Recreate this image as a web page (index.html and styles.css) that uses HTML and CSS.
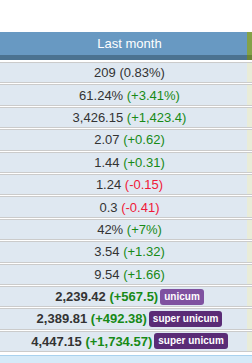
FILE: index.html
```html
<!DOCTYPE html>
<html>
<head>
<meta charset="utf-8">
<link rel="stylesheet" href="styles.css">
</head>
<body>
<div class="page">
  <div class="head">
    <div class="hmain">Last month</div>
    <div class="hside"></div>
  </div>
  <div class="row"><div class="cell">209 <span class="neutral">(0.83%)</span></div><div class="side"></div></div>
  <div class="row"><div class="cell">61.24% <span class="up">(+3.41%)</span></div><div class="side"></div></div>
  <div class="row"><div class="cell">3,426.15 <span class="up">(+1,423.4)</span></div><div class="side"></div></div>
  <div class="row"><div class="cell">2.07 <span class="up">(+0.62)</span></div><div class="side"></div></div>
  <div class="row"><div class="cell">1.44 <span class="up">(+0.31)</span></div><div class="side"></div></div>
  <div class="row"><div class="cell">1.24 <span class="down">(-0.15)</span></div><div class="side"></div></div>
  <div class="row"><div class="cell">0.3 <span class="down">(-0.41)</span></div><div class="side"></div></div>
  <div class="row"><div class="cell">42% <span class="up">(+7%)</span></div><div class="side"></div></div>
  <div class="row"><div class="cell">3.54 <span class="up">(+1.32)</span></div><div class="side"></div></div>
  <div class="row"><div class="cell">9.54 <span class="up">(+1.66)</span></div><div class="side"></div></div>
  <div class="row"><div class="cell bold">2,239.42 <span class="up">(+567.5)</span> <span class="badge unicum">unicum</span></div><div class="side"></div></div>
  <div class="row"><div class="cell bold">2,389.81 <span class="up">(+492.38)</span> <span class="badge super">super unicum</span></div><div class="side"></div></div>
  <div class="row"><div class="cell bold">4,447.15 <span class="up">(+1,734.57)</span> <span class="badge super">super unicum</span></div><div class="side"></div></div>
  <div class="foot"></div>
</div>
</body>
</html>
```
FILE: styles.css
```css
html, body {
  margin: 0;
  padding: 0;
  background: #ffffff;
}
body {
  font-family: "Liberation Sans", Arial, sans-serif;
  font-size: 13px;
  color: #333333;
}
.page {
  padding-top: 32px;
  display: flex;
  flex-direction: column;
}
.head {
  display: flex;
  height: 28px;
}
.hmain {
  flex: 1;
  background: #6899c2;
  border-bottom: 5px solid #4b7290;
  color: #ffffff;
  text-align: center;
  padding-left: 12px;
  line-height: 23px;
  font-size: 13px;
}
.hside {
  width: 5px;
  background: #84a248;
  border-bottom: 5px solid #6a8437;
}
.row {
  display: flex;
  height: 21.4px;
  box-sizing: border-box;
  margin-top: 1px;
  border-top: 1px solid #cbcbcb;
  border-bottom: 1px solid #cbcbcb;
}
.head + .row {
  margin-top: 2px;
}
.cell {
  flex: 1;
  background: #dfe8f1;
  text-align: center;
  padding-left: 12px;
  display: flex;
  align-items: center;
  justify-content: center;
  white-space: pre;
}
.side {
  width: 5px;
  background: #e9ecd8;
}
.neutral {
  color: #333333;
}
.up {
  color: #178a17;
}
.down {
  color: #f01838;
}
.bold {
  font-weight: bold;
}
.badge {
  display: inline-block;
  font-size: 10px;
  font-weight: bold;
  color: #ffffff;
  line-height: 16px;
  padding: 0 4px;
  border-radius: 3px;
  margin-left: 2px;
}
.unicum {
  background: #7f52a0;
}
.super {
  background: #5a2c76;
}
.foot {
  margin-top: 3px;
  height: 10px;
  background: #d5eaf8;
  border-top: 1px solid #a9d2ee;
}
```
